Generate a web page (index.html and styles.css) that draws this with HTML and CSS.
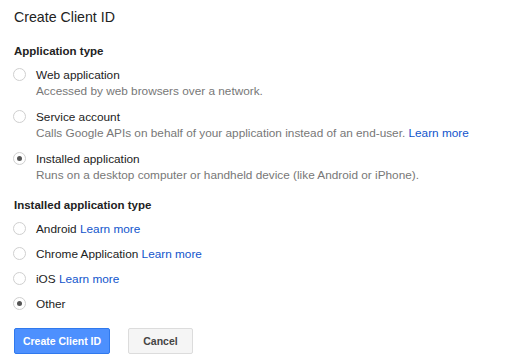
FILE: index.html
```html
<!DOCTYPE html>
<html>
<head>
<meta charset="utf-8">
<link rel="stylesheet" href="styles.css">
</head>
<body>
<div class="page">
  <h1 class="title">Create Client ID</h1>

  <h2 class="section-title">Application type</h2>
  <div class="group">
    <div class="option">
      <span class="radio"></span>
      <div class="option-text">
        <div class="label">Web application</div>
        <div class="desc">Accessed by web browsers over a network.</div>
      </div>
    </div>
    <div class="option">
      <span class="radio"></span>
      <div class="option-text">
        <div class="label">Service account</div>
        <div class="desc">Calls Google APIs on behalf of your application instead of an end-user. <a class="link" href="#">Learn more</a></div>
      </div>
    </div>
    <div class="option">
      <span class="radio checked"></span>
      <div class="option-text">
        <div class="label">Installed application</div>
        <div class="desc">Runs on a desktop computer or handheld device (like Android or iPhone).</div>
      </div>
    </div>
  </div>

  <h2 class="section-title second">Installed application type</h2>
  <div class="group compact">
    <div class="option">
      <span class="radio"></span>
      <div class="label">Android <a class="link" href="#">Learn more</a></div>
    </div>
    <div class="option">
      <span class="radio"></span>
      <div class="label">Chrome Application <a class="link" href="#">Learn more</a></div>
    </div>
    <div class="option">
      <span class="radio"></span>
      <div class="label">iOS <a class="link" href="#">Learn more</a></div>
    </div>
    <div class="option">
      <span class="radio checked"></span>
      <div class="label">Other</div>
    </div>
  </div>

  <div class="actions">
    <button class="btn btn-primary">Create Client ID</button>
    <button class="btn btn-secondary">Cancel</button>
  </div>
</div>
</body>
</html>
```
FILE: styles.css
```css
html, body {
  margin: 0;
  padding: 0;
  background: #fff;
  overflow: hidden;
}
body {
  font-family: "Liberation Sans", Arial, sans-serif;
  color: #222;
  font-size: 11.8px;
  line-height: 16px;
}
.page {
  padding: 8px 14px 0 14px;
}
.title {
  margin: 0;
  font-size: 14.2px;
  font-weight: normal;
  line-height: 18px;
  color: #222;
}
.section-title {
  margin: 17px 0 8px 0;
  font-size: 11.5px;
  font-weight: bold;
  line-height: 16px;
  color: #222;
}
.section-title.second {
  margin-top: 14px;
}
.group {
  display: flex;
  flex-direction: column;
  gap: 10px;
}
.group.compact {
  gap: 9px;
}
.option {
  display: flex;
  align-items: flex-start;
  gap: 10px;
}
.radio {
  box-sizing: border-box;
  flex: none;
  width: 13px;
  height: 13px;
  margin-top: 1px;
  margin-left: -1px;
  border: 1px solid #cfcfcf;
  border-radius: 50%;
  background: #fff;
  position: relative;
}
.radio.checked::after {
  content: "";
  position: absolute;
  left: 50%;
  top: 50%;
  width: 5px;
  height: 5px;
  margin: -2.5px 0 0 -2.5px;
  border-radius: 50%;
  background: #555;
}
.label {
  color: #222;
}
.desc {
  color: #777;
}
.link {
  color: #15c;
  text-decoration: none;
}
.actions {
  display: flex;
  gap: 18px;
  margin-top: 16px;
}
.btn {
  box-sizing: border-box;
  height: 26px;
  padding: 0;
  font-family: "Liberation Sans", Arial, sans-serif;
  font-size: 10.5px;
  font-weight: bold;
  border-radius: 2px;
  line-height: 24px;
  white-space: nowrap;
  text-align: center;
}
.btn-primary {
  width: 96px;
  background: #4d90fe;
  border: 1px solid #3079ed;
  color: #fff;
}
.btn-secondary {
  width: 65px;
  background: #f5f5f5;
  border: 1px solid #dcdcdc;
  color: #444;
}
```
